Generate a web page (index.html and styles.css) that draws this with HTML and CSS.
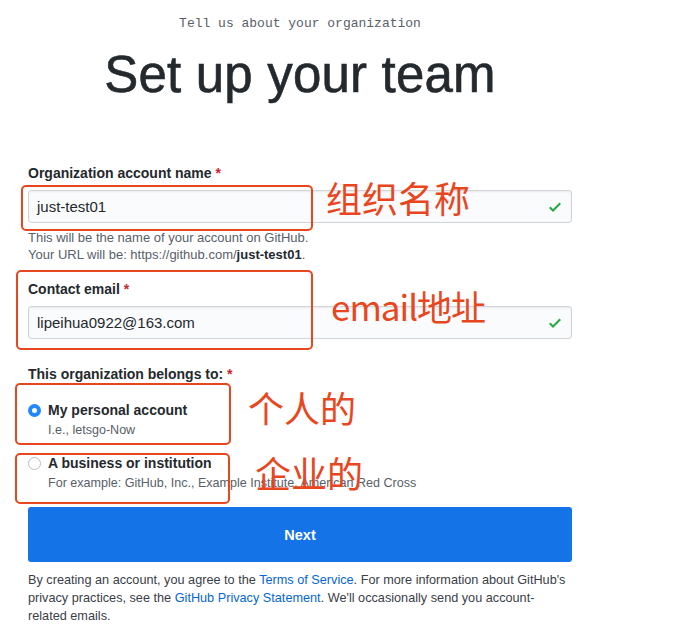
FILE: index.html
```html
<!DOCTYPE html>
<html>
<head>
<meta charset="utf-8">
<link rel="stylesheet" href="styles.css">
</head>
<body>
<div class="page">
  <div class="content">
    <p class="kicker">Tell us about your organization</p>
    <h1 class="title">Set up your team</h1>

    <div class="field field-first">
      <label class="label">Organization account name <span class="req">*</span></label>
      <div class="input"><span>just-test01</span>
        <svg class="check" viewBox="0 0 12 16" width="12" height="16"><path d="M12 5l-8 8-4-4 1.5-1.5L4 10l6.5-6.5L12 5z" fill="#28a745"/></svg>
      </div>
      <p class="note">This will be the name of your account on GitHub.<br>Your URL will be: https://github.com/<b>just-test01</b>.</p>
    </div>

    <div class="field field-second">
      <label class="label">Contact email <span class="req">*</span></label>
      <div class="input"><span>lipeihua0922@163.com</span>
        <svg class="check" viewBox="0 0 12 16" width="12" height="16"><path d="M12 5l-8 8-4-4 1.5-1.5L4 10l6.5-6.5L12 5z" fill="#28a745"/></svg>
      </div>
    </div>

    <div class="field field-third">
      <label class="label">This organization belongs to: <span class="req">*</span></label>
      <div class="radio-row radio-first">
        <span class="radio radio-on"></span>
        <div class="radio-text">
          <div class="radio-title">My personal account</div>
          <div class="radio-sub">I.e., letsgo-Now</div>
        </div>
      </div>
      <div class="radio-row">
        <span class="radio"></span>
        <div class="radio-text">
          <div class="radio-title">A business or institution</div>
          <div class="radio-sub">For example: GitHub, Inc., Example Institute, American Red Cross</div>
        </div>
      </div>
    </div>

    <button class="btn">Next</button>

    <p class="legal">By creating an account, you agree to the <a href="#">Terms of Service</a>. For more information about GitHub's privacy practices, see the <a href="#">GitHub Privacy Statement</a>. We'll occasionally send you account-related emails.</p>
  </div>

  <div class="mark mark-1"></div>
  <div class="mark mark-2"></div>
  <div class="mark mark-3"></div>
  <div class="mark mark-4"></div>
  <div class="note-cn cn-1">组织名称</div>
  <div class="note-cn cn-2">email地址</div>
  <div class="note-cn cn-3">个人的</div>
  <div class="note-cn cn-4">企业的</div>
</div>
</body>
</html>
```
FILE: styles.css
```css
* { box-sizing: border-box; }
html, body { margin: 0; padding: 0; background: #fff; }
body {
  font-family: "Liberation Sans", Arial, sans-serif;
  color: #24292e;
}
.page {
  position: relative;
  width: 675px;
  height: 641px;
  overflow: hidden;
}
.content {
  width: 544px;
  margin-left: 28px;
  display: flex;
  flex-direction: column;
}
.kicker {
  margin: 14px 0 0;
  font-family: "Liberation Mono", "DejaVu Sans Mono", monospace;
  font-size: 13px;
  line-height: 20px;
  color: #586069;
  text-align: center;
}
.title {
  margin: 11px 0 0;
  font-size: 51px;
  line-height: 60px;
  font-weight: 400;
  text-align: center;
  color: #24292e;
  letter-spacing: 0.2px;
  -webkit-text-stroke: 0.6px #24292e;
}
.field { display: flex; flex-direction: column; }
.field-first { margin-top: 58px; }
.field-second { margin-top: 16px; }
.field-third { margin-top: 25px; }
.label {
  font-size: 14px;
  line-height: 20px;
  font-weight: 700;
}
.req { color: #cb2431; }
.input {
  margin-top: 7px;
  height: 33px;
  border: 1px solid #d1d5da;
  border-radius: 3px;
  background: #fafbfc;
  display: flex;
  align-items: center;
  justify-content: space-between;
  padding: 0 10px 0 8px;
  font-size: 15px;
  box-shadow: inset 0 1px 2px rgba(27,31,35,0.075);
}
.check { display: block; }
.note {
  margin: 6px 0 0;
  font-size: 13px;
  line-height: 17px;
  color: #586069;
}
.note b { color: #24292e; font-weight: 700; }
.radio-row {
  display: flex;
  align-items: flex-start;
  gap: 7px;
}
.radio-first { margin-top: 16px; margin-bottom: 13px; }
.radio {
  width: 13px;
  height: 13px;
  border-radius: 50%;
  border: 1px solid #b8bcc1;
  background: #fff;
  margin-top: 4px;
  flex: none;
}
.radio-on {
  border: 4px solid #2188ff;
  background: #fff;
}
.radio-title {
  font-size: 14px;
  line-height: 20px;
  font-weight: 700;
}
.radio-sub {
  font-size: 12.55px;
  line-height: 20px;
  color: #586069;
}
.btn {
  margin-top: 14px;
  height: 55px;
  border: 0;
  border-radius: 3px;
  background: #1473e6;
  color: #fff;
  font-family: "Liberation Sans", Arial, sans-serif;
  font-size: 14.5px;
  font-weight: 700;
}
.legal {
  margin: 9px 0 0;
  font-size: 12.7px;
  line-height: 18px;
  color: #3a4048;
}
.legal a { color: #0366d6; text-decoration: none; }

.mark {
  position: absolute;
  border: 2px solid #e8461e;
  border-radius: 5px;
}
.mark-1 { left: 21px; top: 185px; width: 292px; height: 46px; }
.mark-2 { left: 16px; top: 270px; width: 297px; height: 80px; }
.mark-3 { left: 15px; top: 383px; width: 216px; height: 62px; }
.mark-4 { left: 15px; top: 453px; width: 215px; height: 51px; }
.note-cn {
  position: absolute;
  font-family: "Noto Sans CJK SC", "Noto Sans", sans-serif;
  font-size: 36px;
  line-height: 40px;
  font-weight: 400;
  color: #e8461e;
  white-space: nowrap;
}
.cn-1 { left: 326px; top: 177px; }
.cn-2 { left: 331px; top: 286px; font-size: 35px; letter-spacing: -1px; }
.cn-3 { left: 248px; top: 387px; }
.cn-4 { left: 255px; top: 452px; }
```
